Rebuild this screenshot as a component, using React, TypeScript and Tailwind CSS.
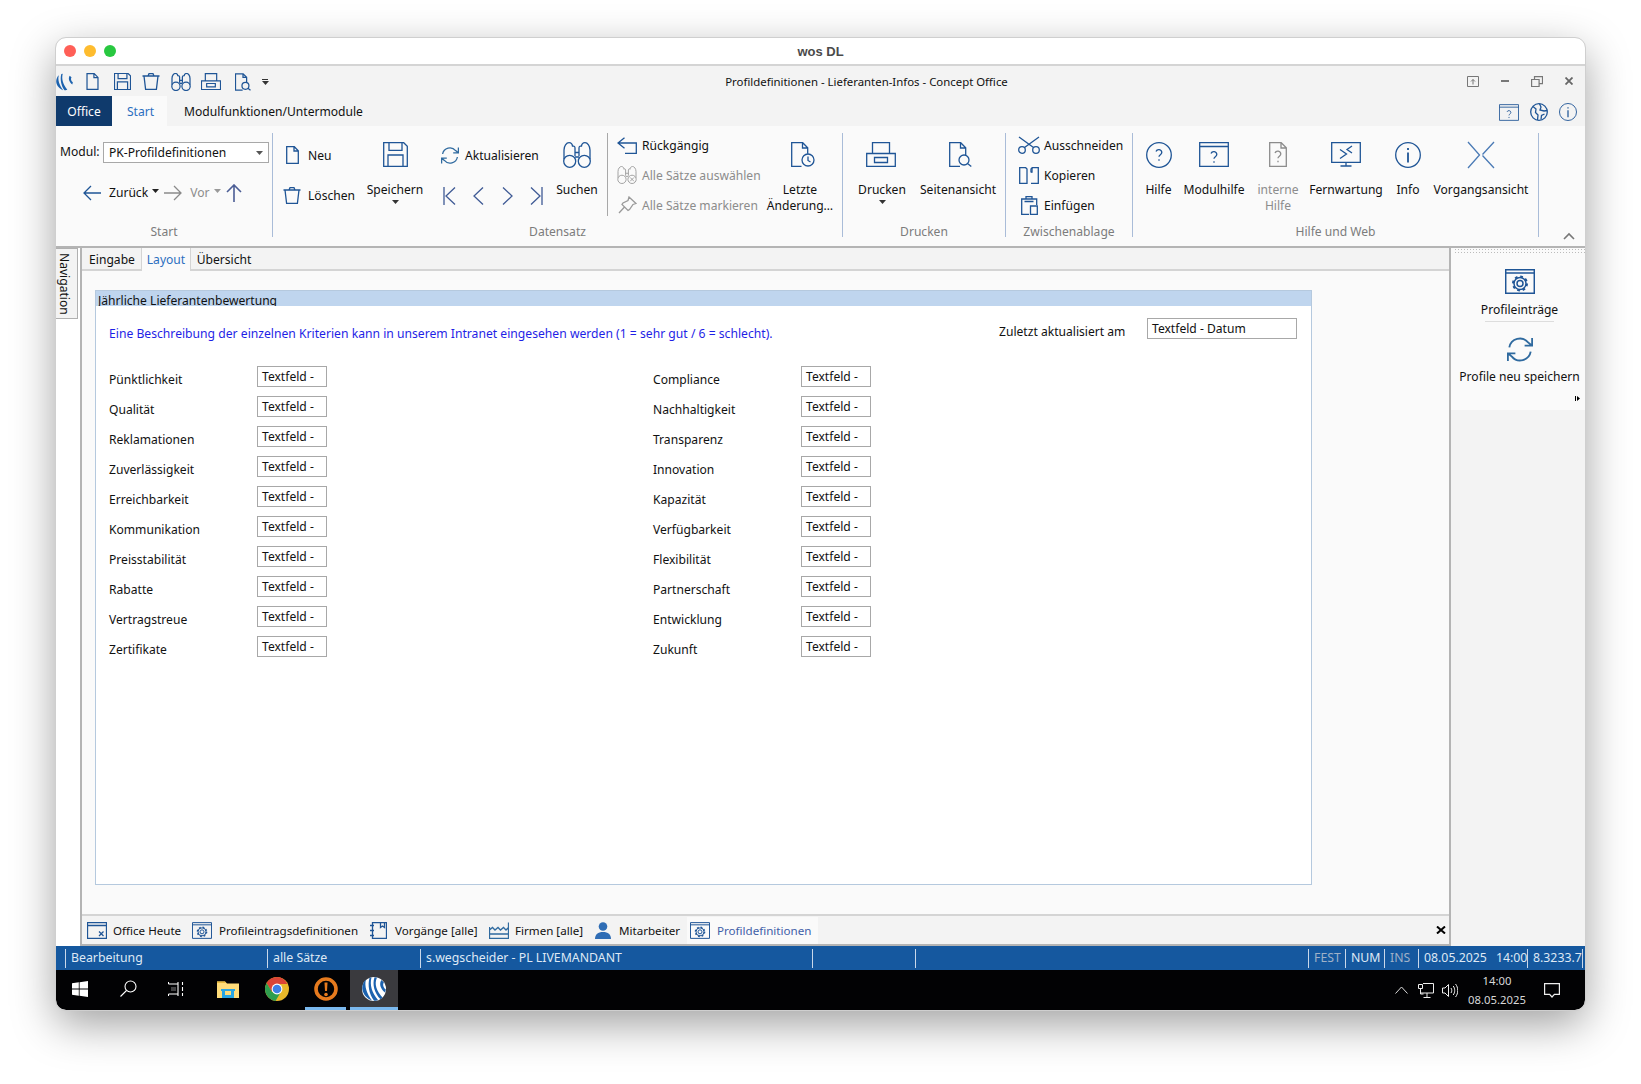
import type { ReactNode } from 'react';

const BLUE = '#1f5596';
const GRAY = '#8c8c8c';

interface IconProps {
    w?: number;
    h?: number;
    color?: string;
    sw?: number;
}

function Svg({ w, h, vb, color = BLUE, sw = 1.3, children }: IconProps & { vb: string; children: ReactNode }) {
    return (
        <svg width={w} height={h} viewBox={vb} fill="none" stroke={color} strokeWidth={sw} className="shrink-0">
            {children}
        </svg>
    );
}

const QUESTION = 'M-3-3.4a3 3 0 0 1 5.8 1c0 2-2.8 2.2-2.8 4.2M0 4.2v1.6';

const DocIcon = ({ w = 13, h = 18, color }: IconProps) => (
    <Svg w={w} h={h} vb="0 0 13 18" color={color}><path d="M.7.7h7.6l4 4v12.6H.7zM8 .7v4.3h4.3" /></Svg>
);
const SaveIcon = ({ w = 25, h = 25, color, sw }: IconProps) => (
    <Svg w={w} h={h} vb="0 0 25 25" color={color} sw={sw}><path d="M.7.7h20l3.6 3.6v20H.7zM6 .7v7.6h13V.7M5 24.3V13h15v11.3" /></Svg>
);
const TrashIcon = ({ w = 18, h = 17, color }: IconProps) => (
    <Svg w={w} h={h} vb="0 0 18 17" color={color}><path d="M.5 3h17M2 3l1.6 13.3h10.8L16 3M6 3l1-2.3h4L12 3" /></Svg>
);
const RefreshIcon = ({ w = 18, h = 17 }: IconProps) => (
    <Svg w={w} h={h} vb="1 1 18 17" color="#2f6a9f"><path d="M2.6 8a7.4 7.4 0 0 1 13-3.4l2.4 2M18.4 1.6v5.2h-5.2M17.4 11a7.4 7.4 0 0 1-13 3.4L2 12.4M1.6 17.4v-5.2h5.2" /></Svg>
);
const BinocularsIcon = ({ w = 28, h = 26, color, cross, sw }: IconProps & { cross?: boolean }) => (
    <Svg w={w} h={h} vb="0 0 28 26" color={color} sw={sw}>
        <circle cx="6.7" cy="19.3" r="6" /><circle cx="21.3" cy="19.3" r="6" />
        <path d="M1 17V8c0-4 2.4-7.3 5-7.3 2.2 0 3.4 1.7 3.6 4M27 17V8c0-4-2.4-7.3-5-7.3-2.2 0-3.4 1.7-3.6 4M9.6 4.7c0-1 2.2-1 2.4 1V14M18.4 4.7c0-1-2.2-1-2.4 1V14M12 10.5h4M12 15h4" />
        {cross && <path d="M18.5 16.5l5.6 5.6M24.1 16.5l-5.6 5.6" />}
    </Svg>
);
const PrinterIcon = ({ w = 30, h = 25, sw }: IconProps) => (
    <Svg w={w} h={h} vb="0 0 30 25" sw={sw}><path d="M.7 11.5h28.6v13H.7zM6.5 11.5V.7h17v10.800M8.5 15.5h13v5h-13z" /></Svg>
);
const PreviewIcon = ({ w = 23, h = 25, sw }: IconProps) => (
    <Svg w={w} h={h} vb="0 0 23 25" sw={sw}><path d="M11 24.3H.7V.7h11l5 5v8M11.5.7v5.3h5" /><circle cx="15" cy="18" r="5" /><path d="M18.5 21.5l3.8 3" /></Svg>
);
const HistoryIcon = () => (
    <Svg w={24} h={25} vb="0 0 24 25"><path d="M10.5 24.3H.7V.7h11l5 5v6M11.5.7v5.3h5" /><circle cx="17" cy="18" r="6" /><path d="M17 14.5v4l2.500 1.500" /></Svg>
);
const ScissorsIcon = () => (
    <Svg w={22} h={18} vb="0 0 22 18"><circle cx="4" cy="14" r="3.3" /><circle cx="18" cy="14" r="3.3" /><path d="M6.5 11.5L21 1M15.5 11.5L1 1" /></Svg>
);
const CopyIcon = () => (
    <Svg w={20} h={17} vb="0 0 20 17"><path d="M8 16.3H.7V.7h6L8 2zM12 16.3h7.300V.7h-6L12 2v3.500" /><path d="M13 .7V5h-1" /></Svg>
);
const PasteIcon = () => (
    <Svg w={17} h={19} vb="0 0 17 19"><path d="M8 18.3H.7V3h15v6M5 3V.7h6V3M3.5 5.5h9M9.5 10h6.800v8.300H9.500z" /></Svg>
);
const UndoIcon = () => (
    <Svg w={20} h={17} vb="0 0 20 17"><path d="M1 6h18.300v10.300H8M7.500.7L1 6l6.500 5.300" /></Svg>
);
const PinIcon = () => (
    <Svg w={19} h={18} vb="0 0 19 18" color="#9a9a9a"><path d="M11 1l7 6.500-3 1-3.500 5-1.500 1-6-6 1-1.500 5-2.500zM6.500 11L1 17" /></Svg>
);
const CircleHelp = () => (
    <Svg w={26} h={26} vb="-13 -13 26 26"><circle r="12.3" /><path d={QUESTION} /></Svg>
);
const WindowHelp = ({ w = 30, h = 25 }: IconProps) => (
    <Svg w={w} h={h} vb="-15 -12.5 30 25"><path d="M-14.3-11.800h28.600v23.600h-28.600zM-14.300-8h28.600" /><g transform="translate(0 2.500)"><path d={QUESTION} /></g></Svg>
);
const DocHelp = () => (
    <Svg w={18} h={25} vb="-9 -12.5 18 25" color={GRAY}><path d="M-8.300-11.800H3.200l5.100 5.100v18.500H-8.300zM3-11.800v5.300h5" /><g transform="translate(0 2)"><path d={QUESTION} /></g></Svg>
);
const RemoteIcon = () => (
    <Svg w={30} h={25} vb="0 0 30 25"><path d="M.7.7h28.600v19.600H.7zM15 20.300v3.500M9.500 24h11M9 7.500l6.500 4.500-6.500 4.500M21 4l-5 3.500 5 3.500" /></Svg>
);
const InfoCircle = ({ w = 26, h = 26 }: IconProps) => (
    <Svg w={w} h={h} vb="-13 -13 26 26"><circle r="12.3" /><path d="M0-2.500V7.500M0-7v2" strokeWidth="1.8" /></Svg>
);
const SplitIcon = () => (
    <Svg w={28} h={28} vb="0 0 28 28" color="#4a7ab5"><path d="M1 1l11.500 13L1 27M27 1L15.500 13.500M15.500 14.500L27 27" /></Svg>
);
const ArrowLeft = ({ color }: IconProps) => (
    <Svg w={18} h={16} vb="0 0 18 16" color={color}><path d="M18 8H1M8 1L1 8l7 7" /></Svg>
);
const ArrowRight = ({ color }: IconProps) => (
    <Svg w={18} h={16} vb="0 0 18 16" color={color}><path d="M0 8h17M10 1l7 7-7 7" /></Svg>
);
const ArrowUp = () => (
    <Svg w={16} h={18} vb="0 0 16 18" color="#4b5d95" sw={1.6}><path d="M8 18V1M1 8l7-7 7 7" /></Svg>
);
const NavIcon = ({ d }: { d: string }) => (
    <Svg w={13} h={18} vb="0 0 13 18" color="#3f5a95"><path d={d} /></Svg>
);
const Caret = ({ color = '#333' }: { color?: string }) => (
    <svg width="7" height="4" viewBox="0 0 7 4" className="shrink-0"><path d="M0 0h7L3.500 4z" fill={color} /></svg>
);
const GearWindow = ({ w = 20, h = 17, color }: IconProps) => (
    <Svg w={w} h={h} vb="-15 -12.5 30 25" color={color} sw={1.5}>
        <path d="M-14.300-11.800h28.600v23.600h-28.600zM-14.300-8.500h28.600" />
        <circle cy="2" r="3" /><circle cy="2" r="6" /><circle cy="2" r="7" strokeWidth="2" strokeDasharray="2.700 2.800" />
    </Svg>
);
const TodayIcon = () => (
    <Svg w={20} h={17} vb="0 0 20 17"><path d="M.5.5h19v16H.5zM.5 3.500h19M12 9.500l4.500 4.500M16.500 9.500L12 14" /></Svg>
);
const NotebookIcon = () => (
    <Svg w={17} h={17} vb="0 0 17 17"><path d="M2.500.5h14v16h-14zM0 3.500h4M0 8.500h4M0 13.500h4M10.500.5v5l2-1.500 2 1.500v-5" /></Svg>
);
const FactoryIcon = () => (
    <Svg w={20} h={17} vb="0 0 20 17" color="#2f6a9f"><path d="M.5 5v11.500h19V.5M.5 12h19M.5 8l3-2.500L6 8l3-2.500L11.500 8l3-2.500L17 8l2.500-2.500" /></Svg>
);
const PersonIcon = () => (
    <svg width="16" height="17" viewBox="0 0 16 17" className="shrink-0" fill="#2f6db5"><circle cx="8" cy="4.500" r="4.300" /><path d="M0 17c0-4.500 3-7 8-7s8 2.500 8 7z" /></svg>
);
const SWOOSH_A = 'M4 2.500C2 9 5 17 10 23.500 6 22 1 18 .3 12 0 8 2 4 4 2.500zM9.500.5C7.500 8 10 16 16 23c-2 .8-3 .8-4 .8C7 17 5.500 8 7.500.8z';
const SWOOSH_B = 'M15 .5C12 7 14.500 14 20.500 20.500l-2 1.800C12.500 16 10 7.500 12.500.2z';
const SWOOSH_C = 'M19.500 3C17 6 18 11.500 23 15.500l.8-3C21 10.500 20.500 6.500 22 5.500z';

const LogoIcon = () => (
    <svg width="24" height="24" viewBox="0 0 24 24" className="shrink-0">
        <circle cx="12" cy="12" r="12" fill="#fff" />
        <path d={`${SWOOSH_A}${SWOOSH_B}${SWOOSH_C}`} fill="#1c62ae" />
    </svg>
);
const LogoQat = () => (
    <svg width="17" height="18" viewBox="0 0 24 24" className="shrink-0">
        <path d={`${SWOOSH_A}${SWOOSH_C}`} fill="#1c62ae" />
    </svg>
);

function RibbonGroup({ label, width, children }: { label: string; width: string; children: ReactNode }) {
    return (
        <div className={`${width} h-[104px] shrink-0 flex flex-col border-r border-[#a9bcd8]`}>
            <div className="flex-1 flex min-h-0">{children}</div>
            <div className="h-[18px] leading-[26px] text-center text-[#7c7c7c]">{label}</div>
        </div>
    );
}

function LargeButton({ width, icon, label, disabled, caret, iconShift }: {
    width: string; icon: ReactNode; label: ReactNode; disabled?: boolean; caret?: boolean; iconShift?: string;
}) {
    return (
        <div className={`${width} shrink-0 flex flex-col items-center pt-[9px] ${disabled ? 'text-[#8c8c8c]' : ''}`}>
            <div className={`h-[25px] flex items-center ${iconShift ?? ''}`}>{icon}</div>
            <div className="mt-[15px] leading-[16px] text-center whitespace-nowrap">{label}</div>
            {caret && <div className="mt-[2px]"><Caret /></div>}
        </div>
    );
}

function SmallRow({ icon, label, disabled }: { icon: ReactNode; label: string; disabled?: boolean }) {
    return (
        <div className={`h-[16px] flex items-center whitespace-nowrap ${disabled ? 'text-[#8c8c8c]' : ''}`}>
            <div className="w-[26px] flex justify-center shrink-0">{icon}</div>
            <span className="ml-[2px] leading-[16px] pt-px">{label}</span>
        </div>
    );
}

function Ribbon() {
    return (
        <div className="h-[120px] shrink-0 bg-[#fafafa] pt-[7px] flex">
            <RibbonGroup label="Start" width="w-[217px]">
                <div className="flex flex-col flex-1">
                    <div className="flex items-center mt-[9px] ml-[4px] h-[21px]">
                        <span className="w-[43px]">Modul:</span>
                        <div className="w-[166px] h-[21px] border border-[#a8a8a8] bg-white flex items-center justify-between pl-[5px] pr-[5px]">
                            <span className="pt-px">PK-Profildefinitionen</span><Caret color="#555" />
                        </div>
                    </div>
                    <div className="flex items-center mt-[20px] ml-[27px] h-[20px]">
                        <ArrowLeft />
                        <span className="ml-[8px]">Zurück</span>
                        <span className="ml-[4px] -mt-[4px]"><Caret color="#222" /></span>
                        <span className="ml-[5px]"><ArrowRight color="#8a8a8a" /></span>
                        <span className="ml-[8px] text-[#8c8c8c]">Vor</span>
                        <span className="ml-[5px] -mt-[4px]"><Caret color="#999" /></span>
                        <span className="ml-[5px]"><ArrowUp /></span>
                    </div>
                </div>
            </RibbonGroup>

            <RibbonGroup label="Datensatz" width="w-[570px]">
                <div className="w-[100px] shrink-0 pl-[6px]">
                    <div className="h-[16px] mt-[14px] flex items-center">
                        <div className="w-[26px] flex justify-center"><DocIcon /></div>
                        <span className="ml-[3px] pt-[2px]">Neu</span>
                    </div>
                    <div className="h-[16px] mt-[24px] flex items-center">
                        <div className="w-[26px] flex justify-center"><TrashIcon /></div>
                        <span className="ml-[3px] pt-[2px]">Löschen</span>
                    </div>
                </div>
                <LargeButton width="w-[44px]" icon={<SaveIcon />} label="Speichern" caret />
                <div className="w-[136px] shrink-0">
                    <div className="h-[19px] mt-[13px] flex items-center pl-[24px]">
                        <RefreshIcon /><span className="ml-[6px] pt-px">Aktualisieren</span>
                    </div>
                    <div className="h-[18px] mt-[22px] flex items-center pl-[26px] gap-[16px]">
                        <NavIcon d="M1 0v18M12 .5L3 9l9 8.500" />
                        <NavIcon d="M11 .5L2 9l9 8.500" />
                        <NavIcon d="M2 .5L11 9l-9 8.500" />
                        <NavIcon d="M12 0v18M1 .5L10 9l-9 8.500" />
                    </div>
                </div>
                <LargeButton width="w-[48px]" icon={<BinocularsIcon />} label="Suchen" />
                <div className="w-px h-[83px] bg-[#a8a8a8] ml-[6px] shrink-0" />
                <div className="w-[157px] shrink-0 pt-[4px] pl-[6px] flex flex-col gap-[14px]">
                    <SmallRow icon={<UndoIcon />} label="Rückgängig" />
                    <SmallRow icon={<BinocularsIcon w={20} h={18} color="#9a9a9a" cross />} label="Alle Sätze auswählen" disabled />
                    <SmallRow icon={<PinIcon />} label="Alle Sätze markieren" disabled />
                </div>
                <LargeButton width="w-[70px]" iconShift="ml-[6px]" icon={<HistoryIcon />} label={<>Letzte<br />Änderung…</>} />
            </RibbonGroup>

            <RibbonGroup label="Drucken" width="w-[163px]">
                <div className="w-[8px] shrink-0" />
                <LargeButton width="w-[62px]" iconShift="mr-[2px]" icon={<PrinterIcon />} label="Drucken" caret />
                <LargeButton width="w-[90px]" iconShift="ml-[4px]" icon={<PreviewIcon />} label="Seitenansicht" />
            </RibbonGroup>

            <RibbonGroup label="Zwischenablage" width="w-[127px]">
                <div className="pt-[4px] pl-[10px] flex flex-col gap-[14px]">
                    <SmallRow icon={<ScissorsIcon />} label="Ausschneiden" />
                    <SmallRow icon={<CopyIcon />} label="Kopieren" />
                    <SmallRow icon={<PasteIcon />} label="Einfügen" />
                </div>
            </RibbonGroup>

            <RibbonGroup label="Hilfe und Web" width="w-[406px]">
                <LargeButton width="w-[51px]" icon={<CircleHelp />} label="Hilfe" />
                <LargeButton width="w-[60px]" icon={<WindowHelp />} label="Modulhilfe" />
                <LargeButton width="w-[68px]" icon={<DocHelp />} label={<>interne<br />Hilfe</>} disabled />
                <LargeButton width="w-[68px]" icon={<RemoteIcon />} label="Fernwartung" />
                <LargeButton width="w-[56px]" icon={<InfoCircle />} label="Info" />
                <LargeButton width="w-[90px]" icon={<SplitIcon />} label="Vorgangsansicht" />
            </RibbonGroup>

            <div className="flex-1 flex justify-end items-end pr-[10px] pb-[6px]">
                <svg width="12" height="8" viewBox="0 0 12 8" fill="none" stroke="#777" strokeWidth="1.6"><path d="M1 7l5-5 5 5" /></svg>
            </div>
        </div>
    );
}

function QuickAccessBar() {
    return (
        <div className="w-[270px] shrink-0 flex items-center pt-px">
            <LogoQat />
            <span className="ml-[13px]"><DocIcon w={13} h={17} /></span>
            <span className="ml-[15px]"><SaveIcon w={17} h={17} sw={1.8} /></span>
            <span className="ml-[11px]"><TrashIcon w={18} h={17} /></span>
            <span className="ml-[11px]"><BinocularsIcon w={20} h={18} sw={1.8} /></span>
            <span className="ml-[10px]"><PrinterIcon w={20} h={17} sw={1.8} /></span>
            <span className="ml-[14px]"><PreviewIcon w={16} h={18} sw={1.8} /></span>
            <span className="ml-[11px] flex flex-col gap-[1px]"><span className="w-[6px] h-px bg-[#333]" /><Caret color="#333" /></span>
        </div>
    );
}

function WindowButtons() {
    return (
        <div className="w-[178px] shrink-0 flex items-center pl-[60px] text-[#777]">
            <svg width="12" height="11" viewBox="0 0 12 11" fill="none" stroke="#777"><path d="M.5.5h11v10H.5zM6 8.500V3.500M4 5.500l2-2 2 2" /></svg>
            <span className="ml-[22px] w-[8px] h-[2px] bg-[#777]" />
            <svg className="ml-[22px]" width="12" height="11" viewBox="0 0 12 11" fill="none" stroke="#777" strokeWidth="1.2"><path d="M.6 3.500h7.500v7H.6zM3.500 3.500V.6h8v7H8" /></svg>
            <svg className="ml-[22px]" width="8" height="8" viewBox="0 0 8 8" fill="none" stroke="#666" strokeWidth="1.8"><path d="M.5.5l7 7M7.500.5l-7 7" /></svg>
        </div>
    );
}

const LEFT_ROWS = ['Pünktlichkeit', 'Qualität', 'Reklamationen', 'Zuverlässigkeit', 'Erreichbarkeit', 'Kommunikation', 'Preisstabilität', 'Rabatte', 'Vertragstreue', 'Zertifikate'];
const RIGHT_ROWS = ['Compliance', 'Nachhaltigkeit', 'Transparenz', 'Innovation', 'Kapazität', 'Verfügbarkeit', 'Flexibilität', 'Partnerschaft', 'Entwicklung', 'Zukunft'];

function FieldRow({ label }: { label: string }) {
    return (
        <div className="flex h-[21px]">
            <div className="w-[148px] pt-[6px] leading-[16px] whitespace-nowrap">{label}</div>
            <div className="w-[70px] h-[21px] border border-[#a8a8a8] bg-white pl-[4px] leading-[19px]">Textfeld -</div>
        </div>
    );
}

function ProfileForm() {
    return (
        <div className="w-[1217px] h-[595px] border border-[#b5c9de] bg-white shrink-0">
            <div className="h-[15px] bg-[#bfd5ee] pl-[2px] leading-[19px] overflow-hidden whitespace-nowrap">Jährliche Lieferantenbewertung</div>
            <div className="pl-[13px] pr-[14px] pt-[12px]">
                <div className="flex">
                    <div className="flex-1 pt-[8px] leading-[16px] text-[12.17px] text-[#1f1fe6]">
                        Eine Beschreibung der einzelnen Kriterien kann in unserem Intranet eingesehen werden (1 = sehr gut / 6 = schlecht).
                    </div>
                    <div className="w-[148px] pt-[6px] leading-[16px] whitespace-nowrap">Zuletzt aktualisiert am</div>
                    <div className="w-[150px] h-[21px] border border-[#a8a8a8] pl-[4px] leading-[19px]">Textfeld - Datum</div>
                </div>
                <div className="mt-[24px] grid grid-cols-[544px_218px] gap-y-[9px]">
                    {LEFT_ROWS.map((left, i) => (
                        <div key={left} className="contents">
                            <FieldRow label={left} />
                            <FieldRow label={RIGHT_ROWS[i]} />
                        </div>
                    ))}
                </div>
            </div>
        </div>
    );
}

function BottomTab({ width, icon, label, gap, active }: { width: string; icon: ReactNode; label: string; gap: string; active?: boolean }) {
    return (
        <div className={`${width} ${gap} shrink-0 flex items-center pl-[3px] whitespace-nowrap h-[27px] ${active ? 'bg-[#fafafa] text-[#3f5fa8]' : ''}`}>
            {icon}<span className="pt-[2px]">{label}</span>
        </div>
    );
}

function MainArea() {
    return (
        <div className="h-[700px] shrink-0 flex border-t-2 border-[#b4b4b4] bg-[#fafafa]">
            <div className="w-[24px] shrink-0 bg-white">
                <div className="w-[22px] h-[71px] bg-[#f3f3f3] border border-l-0 border-[#b0b0b0] flex items-center justify-center pr-[5px]">
                    <span className="[writing-mode:vertical-rl] leading-[14px]">Navigation</span>
                </div>
            </div>
            <div className="w-[1371px] shrink-0 flex flex-col border-l-2 border-r-2 border-b-2 border-[#b4b4b4]">
                <div className="h-[23px] shrink-0 flex bg-[#f3f3f3] border-b-2 border-[#d4d4d4] pl-px">
                    <div className="w-[58px] h-[22px] pt-[2px] flex items-center justify-center">Eingabe</div>
                    <div className="w-[50px] h-[23px] pt-px bg-[#fafafa] border-x border-[#d4d4d4] text-[#2c6fbf] flex items-center justify-center">Layout</div>
                    <div className="w-[66px] h-[22px] pt-[2px] flex items-center justify-center">Übersicht</div>
                </div>
                <div className="flex-1 min-h-0 pl-[13px] pt-[19px] border-b-2 border-[#d4d4d4]">
                    <ProfileForm />
                </div>
                <div className="h-[28px] shrink-0 bg-[#f3f3f3] flex items-center pl-[2px] pr-[3px] text-[11.6px]">
                    <BottomTab width="w-[105px]" gap="gap-[6px]" icon={<TodayIcon />} label="Office Heute" />
                    <BottomTab width="w-[178px]" gap="gap-[7px]" icon={<GearWindow />} label="Profileintragsdefinitionen" />
                    <BottomTab width="w-[119px]" gap="gap-[8px]" icon={<NotebookIcon />} label="Vorgänge [alle]" />
                    <BottomTab width="w-[106px]" gap="gap-[6px]" icon={<FactoryIcon />} label="Firmen [alle]" />
                    <BottomTab width="w-[95px]" gap="gap-[8px]" icon={<PersonIcon />} label="Mitarbeiter" />
                    <BottomTab width="w-[131px]" gap="gap-[7px]" icon={<GearWindow />} label="Profildefinitionen" active />
                    <div className="flex-1 flex justify-end">
                        <svg width="10" height="8" viewBox="0 0 10 8" fill="none" stroke="#000" strokeWidth="2"><path d="M1 .5l8 7M9 .5l-8 7" /></svg>
                    </div>
                </div>
            </div>
            <div className="flex-1 min-w-0 flex flex-col">
                <div className="h-[162px] bg-[#fafafa] pl-[3px] flex flex-col items-center">
                    <div className="w-full h-[6px] bg-[radial-gradient(#bbb_1px,transparent_1px)] bg-[length:3px_3px]" />
                    <div className="mt-[15px]"><GearWindow w={30} h={25} /></div>
                    <div className="mt-[8px] leading-[16px]">Profileinträge</div>
                    <div className="w-[69px] h-px bg-[#dddddd] mt-[3px]" />
                    <div className="mt-[15px]"><RefreshIcon w={26} h={25} /></div>
                    <div className="mt-[7px] leading-[16px] whitespace-nowrap">Profile neu speichern</div>
                    <div className="self-end mr-[5px] mt-[11px] flex items-center gap-px">
                        <span className="w-px h-[5px] bg-black" />
                        <svg width="3" height="5" viewBox="0 0 3 5"><path d="M0 0l3 2.500L0 5z" /></svg>
                    </div>
                </div>
                <div className="flex-1 bg-[#f3f3f3]" />
            </div>
        </div>
    );
}

function StatusCell({ width, children, muted }: { width: string; children?: ReactNode; muted?: boolean }) {
    return (
        <div className={`${width} h-[19px] shrink-0 border-l border-[#c9d8ea] pl-[5px] flex items-center whitespace-nowrap ${muted ? 'text-[#9fb1c8]' : ''}`}>
            {children}
        </div>
    );
}

function StatusBar() {
    return (
        <div className="h-[24px] shrink-0 bg-[#15589f] text-[#dfe9f5] text-[12.3px] flex items-center pl-[9px]">
            <StatusCell width="w-[202px]">Bearbeitung</StatusCell>
            <StatusCell width="w-[153px]">alle Sätze</StatusCell>
            <StatusCell width="w-[392px]">s.wegscheider - PL LIVEMANDANT</StatusCell>
            <StatusCell width="w-[103px]" />
            <StatusCell width="w-[393px]" />
            <StatusCell width="w-[37px]" muted>FEST</StatusCell>
            <StatusCell width="w-[39px]">NUM</StatusCell>
            <StatusCell width="w-[34px]" muted>INS</StatusCell>
            <StatusCell width="w-[109px]"><span>08.05.2025</span><span className="ml-[9px]">14:00</span></StatusCell>
            <StatusCell width="w-[55px]">8.3233.7</StatusCell>
            <div className="w-px h-[19px] bg-[#c9d8ea]" />
        </div>
    );
}

function TaskCell({ width, children, active, running }: { width: string; children: ReactNode; active?: boolean; running?: boolean }) {
    return (
        <div className={`${width} h-full shrink-0 flex items-center justify-center border-b-[3px] ${active ? 'bg-[#3a3a3e] border-[#7ab8ee]' : running ? 'border-[#7ab8ee] mx-[4px]' : 'border-transparent'}`}>
            {children}
        </div>
    );
}

function Taskbar() {
    return (
        <div className="h-[40px] shrink-0 bg-[#020204] text-[#d8d8d8] flex items-center rounded-b-[10px] overflow-hidden">
            <TaskCell width="w-[48px]">
                <svg width="16" height="16" viewBox="0 0 16 16" fill="#fff"><path d="M0 2.300l6.800-1v6.300H0zM7.600 1.200L16 0v7.600H7.600zM0 8.400h6.800v6.300l-6.800-1zM7.600 8.400H16V16l-8.400-1.200z" /></svg>
            </TaskCell>
            <TaskCell width="w-[48px]">
                <svg width="17" height="17" viewBox="0 0 17 17" fill="none" stroke="#fff" strokeWidth="1.1"><circle cx="10.5" cy="6.5" r="5.5" /><path d="M6.500 10.500L.5 16.500" /></svg>
            </TaskCell>
            <TaskCell width="w-[48px]">
                <svg width="16" height="16" viewBox="0 0 16 16" fill="none" stroke="#fff" strokeWidth="1.1"><path d="M.5 3H10v10H.5M.5 1v2M.5 13v2M10 1v2M10 13v2M14.500 1v3M14.500 6v4M14.500 12v3" /><path d="M3 6h5v4H3z" fill="#fff" fillOpacity="0.25" stroke="none" /></svg>
            </TaskCell>
            <div className="w-[3px] shrink-0" />
            <TaskCell width="w-[49px]">
                <svg width="22" height="18" viewBox="0 0 22 18">
                    <path d="M0 1.500h8l2 2h12V18H0z" fill="#ffdc7a" /><path d="M0 1.500h8L9 3H0z" fill="#e8b93e" />
                    <path d="M4 9h14v2H4z" fill="#29a5e3" /><path d="M5 11h3v7H5zM14 11h3v7h-3z" fill="#29a5e3" /><path d="M5 15h12v3H5z" fill="#29a5e3" /><path d="M8 11h6v4H8z" fill="#ffdc7a" />
                </svg>
            </TaskCell>
            <TaskCell width="w-[49px]">
                <svg width="24" height="24" viewBox="0 0 24 24">
                    <circle cx="12" cy="12" r="12" fill="#e9b82a" />
                    <path d="M12 0A12 12 0 0 0 1.600 6l5.200 9L12 7h10.400A12 12 0 0 0 12 0z" fill="#db4437" />
                    <path d="M1.600 6a12 12 0 0 0 8.900 17.900L15.800 15H7z" fill="#2f9e4f" />
                    <circle cx="12" cy="12" r="5.4" fill="#fff" /><circle cx="12" cy="12" r="4.3" fill="#3f7fe6" />
                </svg>
            </TaskCell>
            <TaskCell width="w-[41px]" running>
                <svg width="24" height="24" viewBox="0 0 24 24" className="shrink-0">
                    <circle cx="12" cy="12" r="10" fill="none" stroke="#e67a1e" strokeWidth="3.6" />
                    <path d="M10.500 5.500h3L13 14h-2z" fill="#e67a1e" /><circle cx="12" cy="17.5" r="1.8" fill="#e67a1e" />
                </svg>
            </TaskCell>
            <TaskCell width="w-[48px]" active><LogoIcon /></TaskCell>
            <div className="ml-[997px] flex items-center">
                <svg width="13" height="8" viewBox="0 0 13 8" fill="none" stroke="#ddd"><path d="M.5 7.500l6-6.500 6 6.500" /></svg>
                <svg className="ml-[10px]" width="16" height="15" viewBox="0 0 16 15" fill="none" stroke="#eee"><path d="M5 .5h10.500V10H3M9 10v4M5.500 14.500h7M.5 1.500h4v4h-4zM2.500 5.500V11h3" /></svg>
                <svg className="ml-[8px]" width="16" height="15" viewBox="0 0 16 15" fill="none" stroke="#eee"><path d="M.5 5H3l3.500-3.500v12L3 10H.5zM9 5c1 1.500 1 3.500 0 5M11.200 3c2 2.500 2 6.500 0 9M13.500 1c3 3.500 3 9.500 0 13" /></svg>
                <div className="w-[78px] text-center leading-[19px] text-[11.3px]"><div>14:00</div><div>08.05.2025</div></div>
                <svg className="ml-[8px]" width="16" height="15" viewBox="0 0 16 15" fill="none" stroke="#eee" strokeWidth="1.2"><path d="M.6.6h14.800v10.800h-5L8 14l-2.400-2.600h-5z" /></svg>
            </div>
        </div>
    );
}

export default function App() {
    return (
        <div className="w-[1641px] h-[1084px] bg-white overflow-hidden pt-[38px] pl-[56px] font-['Noto_Sans',sans-serif] text-[12.1px] text-[#111111]">
            <div className="w-[1529px] h-[972px] rounded-[10px] flex flex-col shadow-[0_14px_44px_rgba(0,0,0,0.38)] outline outline-[#cfcfcf]">
                <div className="h-[28px] shrink-0 bg-white rounded-t-[10px] border-b-2 border-[#d4d4d4] flex items-center pl-[8px] gap-[8px]">
                    <span className="w-[12px] h-[12px] rounded-full bg-[#ff5f57]" />
                    <span className="w-[12px] h-[12px] rounded-full bg-[#febc2e]" />
                    <span className="w-[12px] h-[12px] rounded-full bg-[#28c840]" />
                    <div className="flex-1 text-center pr-[68px] pt-[2px] font-['Liberation_Sans',sans-serif] font-bold text-[13px] text-[#4a4a4a]">wos DL</div>
                </div>
                <div className="h-[30px] shrink-0 bg-[#f3f3f3] flex items-center">
                    <QuickAccessBar />
                    <div className="flex-1 text-center whitespace-nowrap text-[11.4px] pt-[2px]">Profildefinitionen - Lieferanten-Infos - Concept Office</div>
                    <WindowButtons />
                </div>
                <div className="h-[30px] shrink-0 bg-[#f3f3f3] flex items-center">
                    <div className="w-[56px] h-[30px] pt-[2px] bg-[#0f3a6c] text-white flex items-center justify-center">Office</div>
                    <div className="w-[55px] h-[30px] pt-[2px] pl-[2px] bg-[#fafafa] text-[#2c6fbf] flex items-center justify-center">Start</div>
                    <div className="ml-[17px] pt-[2px]">Modulfunktionen/Untermodule</div>
                    <div className="ml-auto flex items-center pr-[8px] pt-[2px] gap-[11px]">
                        <WindowHelp w={20} h={17} />
                        <svg width="18" height="18" viewBox="0 0 18 18" fill="none" stroke={BLUE} strokeWidth="1.3"><circle cx="9" cy="9" r="8.3" /><path d="M3 3.500L6 6l-.5 3.500L8 12l-.5 5M9.500.7L11 4l-1 3 4 1 3.300-.5M11 16.500l.5-4 3-1.500" /></svg>
                        <InfoCircle w={18} h={18} />
                    </div>
                </div>
                <Ribbon />
                <MainArea />
                <StatusBar />
                <Taskbar />
            </div>
        </div>
    );
}
